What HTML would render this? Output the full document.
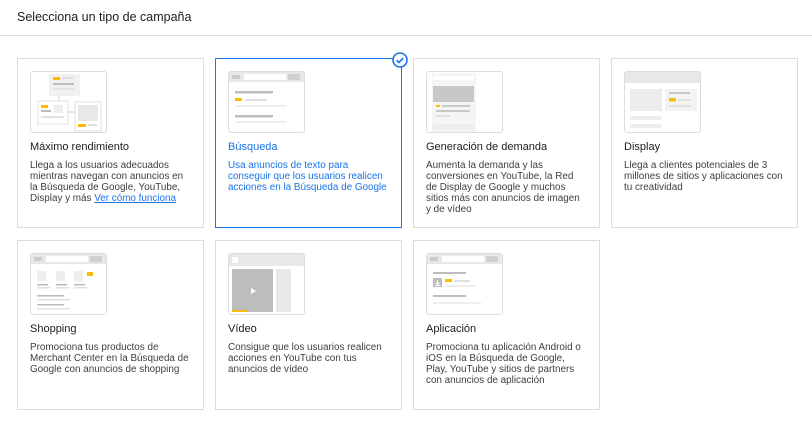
<!DOCTYPE html>
<html><head><meta charset="utf-8"><style>
*{margin:0;padding:0;box-sizing:border-box}
body{width:812px;height:430px;background:#fff;font-family:"Liberation Sans",Arial,sans-serif;position:relative;overflow:hidden;color:#3c4043}
.hdr{position:absolute;left:17px;top:10px;font-size:12.5px;color:#202124}
.line{position:absolute;left:0;top:35px;width:812px;height:1px;background:#dadce0}
.card{position:absolute;width:187px;height:170px;border:1px solid #dadce0;background:#fff}
.card.sel{border-color:#1a73e8}
.th{position:absolute;left:12px;top:12px;width:77px;height:62px;border:1px solid #dadce0;border-radius:3px;overflow:hidden;background:#fff}
.t{position:absolute;left:12px;top:82px;font-size:11px;color:#202124}
.d{position:absolute;left:12px;top:101px;width:160px;font-size:9.9px;line-height:11px;color:#3c4043}
.sel .t,.sel .d{color:#1a73e8}
a{color:#1a73e8}
</style></head><body>
<div class="hdr">Selecciona un tipo de campaña</div>
<div class="line"></div>

<div class="card" style="left:17px;top:58px">
<div class="th"><svg width="77" height="62"><rect x="18" y="2" width="31" height="22" fill="#f1f1f1"/><rect x="22" y="5" width="7" height="3" fill="#fbbc04"/><rect x="31" y="5" width="12" height="2" fill="#e0e0e0"/><rect x="22" y="11" width="21" height="2" fill="#bdbdbd"/><rect x="22" y="16" width="21" height="1.5" fill="#e0e0e0"/><line x1="28" y1="24" x2="28" y2="29" stroke="#ccc"/><rect x="7" y="29" width="30" height="23" fill="#fff" stroke="#e0e0e0"/><rect x="10" y="33" width="7" height="3" fill="#fbbc04"/><rect x="10" y="38" width="10" height="2" fill="#bdbdbd"/><rect x="23" y="33" width="9" height="8" fill="#eee"/><rect x="10" y="44" width="23" height="2" fill="#e0e0e0"/><line x1="37" y1="40" x2="44" y2="40" stroke="#ccc"/><rect x="44" y="30" width="26" height="29" fill="#fff" stroke="#e0e0e0"/><rect x="47" y="33" width="20" height="16" fill="#e8e8e8"/><rect x="47" y="52" width="8" height="3" fill="#fbbc04"/><rect x="57" y="52" width="9" height="2" fill="#e0e0e0"/></svg></div>
<div class="t">Máximo rendimiento</div>
<div class="d">Llega a los usuarios adecuados mientras navegan con anuncios en la Búsqueda de Google, YouTube, Display y más <a href="#">Ver cómo funciona</a></div>
</div>

<div class="card sel" style="left:215px;top:58px">
<svg style="position:absolute;right:-7px;top:-7px" width="16" height="16"><circle cx="8" cy="8" r="7" fill="#fff" stroke="#1a73e8" stroke-width="1.6"/><path d="M4.5 8.2l2.3 2.3 4.5-4.5" fill="none" stroke="#1a73e8" stroke-width="1.6"/></svg>
<div class="th"><svg width="77" height="62"><rect width="77" height="10" fill="#e8e8e8"/><rect x="15" y="2" width="42" height="6" fill="#fff"/><rect x="59" y="2" width="12" height="6" fill="#d0d0d0"/><rect x="3" y="3" width="8" height="4" fill="#ccc"/><rect x="6" y="19" width="38" height="2.5" fill="#bdbdbd"/><rect x="6" y="26" width="7" height="3" fill="#fbbc04"/><rect x="16" y="27" width="22" height="2" fill="#e0e0e0"/><rect x="6" y="33" width="51" height="2" fill="#eee"/><rect x="6" y="43" width="38" height="2.5" fill="#bdbdbd"/><rect x="6" y="49" width="51" height="2" fill="#eee"/></svg></div>
<div class="t">Búsqueda</div>
<div class="d">Usa anuncios de texto para conseguir que los usuarios realicen acciones en la Búsqueda de Google</div>
</div>

<div class="card" style="left:413px;top:58px">
<div class="th"><svg width="77" height="62"><rect x="5" y="1" width="44" height="61" fill="#f5f5f5"/><rect x="6" y="4" width="41" height="4" fill="#fff"/><rect x="6" y="14" width="41" height="16" fill="#c8c8c8"/><rect x="9" y="33" width="4" height="2" fill="#fbbc04"/><rect x="15" y="33" width="28" height="2" fill="#c8c8c8"/><rect x="9" y="38" width="34" height="2" fill="#c8c8c8"/><rect x="9" y="43" width="14" height="2" fill="#e0e0e0"/><rect x="6" y="52" width="41" height="6" fill="#eee"/></svg></div>
<div class="t">Generación de demanda</div>
<div class="d">Aumenta la demanda y las conversiones en YouTube, la Red de Display de Google y muchos sitios más con anuncios de imagen y de vídeo</div>
</div>

<div class="card" style="left:611px;top:58px">
<div class="th"><svg width="77" height="62"><rect width="77" height="11" fill="#e8e8e8"/><rect x="5" y="17" width="32" height="22" fill="#ececec"/><rect x="40" y="17" width="32" height="22" fill="#f3f3f3"/><rect x="44" y="20" width="21" height="2" fill="#c8c8c8"/><rect x="44" y="26" width="7" height="3.5" fill="#fbbc04"/><rect x="53" y="27" width="13" height="2" fill="#e0e0e0"/><rect x="44" y="33" width="22" height="2" fill="#e0e0e0"/><rect x="5" y="44" width="32" height="4" rx="2" fill="#ececec"/><rect x="5" y="52" width="32" height="4" rx="2" fill="#ececec"/></svg></div>
<div class="t">Display</div>
<div class="d">Llega a clientes potenciales de 3 millones de sitios y aplicaciones con tu creatividad</div>
</div>

<div class="card" style="left:17px;top:240px">
<div class="th"><svg width="77" height="62"><rect width="77" height="10" fill="#e8e8e8"/><rect x="15" y="2" width="42" height="6" fill="#fff"/><rect x="59" y="2" width="12" height="6" fill="#d0d0d0"/><rect x="3" y="3" width="8" height="4" fill="#ccc"/><rect x="6" y="17" width="9" height="10" fill="#eee"/><rect x="25" y="17" width="9" height="10" fill="#eee"/><rect x="43" y="17" width="9" height="10" fill="#eee"/><rect x="56" y="18" width="6" height="4" fill="#fbbc04"/><rect x="6" y="30" width="11" height="1.5" fill="#bbb"/><rect x="6" y="33" width="13" height="1.5" fill="#e0e0e0"/><rect x="25" y="30" width="11" height="1.5" fill="#bbb"/><rect x="25" y="33" width="13" height="1.5" fill="#e0e0e0"/><rect x="43" y="30" width="11" height="1.5" fill="#bbb"/><rect x="43" y="33" width="13" height="1.5" fill="#e0e0e0"/><rect x="6" y="41" width="27" height="1.5" fill="#bbb"/><rect x="6" y="45" width="33" height="1.5" fill="#e0e0e0"/><rect x="6" y="50" width="27" height="1.5" fill="#bbb"/><rect x="6" y="54" width="33" height="1.5" fill="#e0e0e0"/></svg></div>
<div class="t">Shopping</div>
<div class="d">Promociona tus productos de Merchant Center en la Búsqueda de Google con anuncios de shopping</div>
</div>

<div class="card" style="left:215px;top:240px">
<div class="th"><svg width="77" height="62"><rect width="77" height="12" fill="#e8e8e8"/><rect x="3" y="3" width="6" height="6" rx="1" fill="#fff"/><rect x="3" y="15" width="41" height="43" fill="#bdbdbd"/><path d="M22 34l5 3-5 3z" fill="#fff"/><rect x="3" y="56" width="16" height="2" fill="#fbbc04"/><rect x="47" y="15" width="15" height="43" fill="#e8e8e8"/></svg></div>
<div class="t">Vídeo</div>
<div class="d">Consigue que los usuarios realicen acciones en YouTube con tus anuncios de vídeo</div>
</div>

<div class="card" style="left:413px;top:240px">
<div class="th"><svg width="77" height="62"><rect width="77" height="10" fill="#e8e8e8"/><rect x="15" y="2" width="42" height="6" fill="#fff"/><rect x="59" y="2" width="12" height="6" fill="#d0d0d0"/><rect x="3" y="3" width="8" height="4" fill="#ccc"/><rect x="6" y="18" width="33" height="2" fill="#bdbdbd"/><rect x="6" y="24" width="9" height="9" fill="#bdbdbd"/><path d="M10.5 26v4M8.5 28.5l2 2 2-2M8 31.5h5" stroke="#fff" fill="none"/><rect x="18" y="25" width="7" height="3" fill="#fbbc04"/><rect x="27" y="26" width="16" height="2" fill="#e0e0e0"/><rect x="18" y="31" width="30" height="2" fill="#eee"/><rect x="6" y="41" width="33" height="2" fill="#bdbdbd"/><rect x="6" y="48" width="48" height="2" fill="#eee"/></svg></div>
<div class="t">Aplicación</div>
<div class="d">Promociona tu aplicación Android o iOS en la Búsqueda de Google, Play, YouTube y sitios de partners con anuncios de aplicación</div>
</div>
</body></html>
